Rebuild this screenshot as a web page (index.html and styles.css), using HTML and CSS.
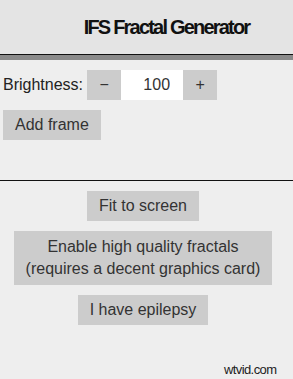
FILE: index.html
```
<!DOCTYPE html>
<html lang="en">
<head>
    <meta charset="UTF-8">
    <meta name="viewport" content="width=device-width, initial-scale=1.0">
    <title>IFS Fractal Generator</title>
    <link rel="stylesheet" href="styles.css">
</head>
<body>

    <div class="header">
        <h1>IFS Fractal Generator</h1>
    </div>

    <div class="controls">
        <div class="brightness">
            <span class="label">Brightness:</span>
            <button class="step">&minus;</button>
            <input type="text" value="100" class="value">
            <button class="step">+</button>
        </div>
        <div class="row">
            <button>Add frame</button>
        </div>
    </div>

    <div class="options">
        <button>Fit to screen</button>
        <button class="tall">Enable high quality fractals<br>(requires a decent graphics card)</button>
        <button>I have epilepsy</button>
    </div>

    <div class="watermark">wtvid.com</div>

</body>
</html>
```

FILE: styles.css
```
body {
    font-family: "Liberation Sans", Arial, sans-serif;
    background-color: #eeeeee;
    margin: 0;
    font-size: 16px;
    color: #222;
}

.header {
    background-color: #e4e4e4;
    height: 54px;
    border-bottom: 1px solid #111;
    box-shadow: 0 5px 0 #8a8a8a;
    display: flex;
    align-items: center;
    justify-content: center;
    margin-bottom: 5px;
}

h1 {
    margin: 0 0 0 40px;
    font-size: 20px;
    letter-spacing: -1.8px;
    color: #111;
}

.controls {
    padding: 10px 3px 0 3px;
    height: 110px;
    border-bottom: 1px solid #111;
}

.brightness {
    display: flex;
    align-items: center;
}

.label {
    margin-right: 4px;
}

button {
    font-family: "Liberation Sans", Arial, sans-serif;
    background-color: #cccccc;
    color: #333;
    font-size: 16px;
    line-height: 22px;
    padding: 4px 12px;
    border: none;
    border-radius: 0;
}

.step {
    width: 34px;
    padding: 4px 0;
}

.value {
    width: 62px;
    height: 30px;
    box-sizing: border-box;
    border: none;
    background-color: white;
    font-family: "Liberation Sans", Arial, sans-serif;
    font-size: 16px;
    color: #333;
    text-align: right;
    padding: 0 13px 0 0;
    outline: none;
}

.row {
    margin-top: 10px;
}

.options {
    display: flex;
    flex-direction: column;
    align-items: center;
    gap: 10px;
    padding: 10px 7px 0 0;
}

.options .tall {
    padding: 5px 12px;
}

.watermark {
    position: absolute;
    left: 224px;
    top: 362px;
    font-size: 13px;
    letter-spacing: -0.6px;
    color: #222;
}
```
